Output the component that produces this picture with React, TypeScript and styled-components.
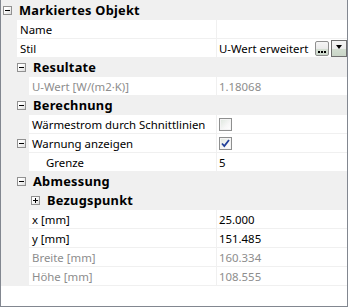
import React from "react";
import styled, { createGlobalStyle } from "styled-components";

const GlobalStyle = createGlobalStyle`
  html, body {
    margin: 0;
    padding: 0;
    background: #ffffff;
  }
  body {
    font-family: "Noto Sans", "DejaVu Sans", sans-serif;
    font-size: 11.4px;
    color: #000000;
  }
`;

type RowData =
  | { kind: "category"; level: number; label: string; expanded: boolean }
  | {
      kind: "item";
      label: string;
      gutter: number;
      indent?: number;
      value?: string;
      disabled?: boolean;
      expander?: boolean;
      editor?: "checkbox" | "dropdown";
      checked?: boolean;
    };

const rows: RowData[] = [
  { kind: "category", level: 0, label: "Markiertes Objekt", expanded: true },
  { kind: "item", label: "Name", gutter: 14 },
  { kind: "item", label: "Stil", gutter: 14, value: "U-Wert erweitert", editor: "dropdown" },
  { kind: "category", level: 1, label: "Resultate", expanded: true },
  { kind: "item", label: "U-Wert [W/(m2·K)]", gutter: 28, value: "1.18068", disabled: true },
  { kind: "category", level: 1, label: "Berechnung", expanded: true },
  { kind: "item", label: "Wärmestrom durch Schnittlinien", gutter: 28, editor: "checkbox", checked: false },
  { kind: "item", label: "Warnung anzeigen", gutter: 28, expander: true, editor: "checkbox", checked: true },
  { kind: "item", label: "Grenze", gutter: 28, indent: 14, value: "5" },
  { kind: "category", level: 1, label: "Abmessung", expanded: true },
  { kind: "category", level: 2, label: "Bezugspunkt", expanded: false },
  { kind: "item", label: "x [mm]", gutter: 28, value: "25.000" },
  { kind: "item", label: "y [mm]", gutter: 28, value: "151.485" },
  { kind: "item", label: "Breite [mm]", gutter: 28, value: "160.334", disabled: true },
  { kind: "item", label: "Höhe [mm]", gutter: 28, value: "108.555", disabled: true },
];

const Frame = styled.div`
  width: 348px;
  height: 307px;
  box-sizing: border-box;
  border: 1px solid #828790;
  border-top: none;
  background: #ffffff;
  overflow: hidden;
`;

const Grid = styled.div`
  display: flex;
  flex-direction: column;
  gap: 1px;
  padding: 1px 0;
  background: #f0f0f0;
`;

const CategoryRow = styled.div<{ $level: number }>`
  height: 18px;
  display: flex;
  align-items: center;
  padding-left: ${({ $level }) => 2 + $level * 14}px;
  background: #f0f0f0;
  white-space: nowrap;
`;

const CategoryLabel = styled.span`
  margin-left: 7px;
  font-weight: 700;
  font-size: 12.8px;
  letter-spacing: 0.25px;
`;

const Expander = styled.span`
  position: relative;
  width: 9px;
  height: 9px;
  box-sizing: border-box;
  flex: none;
  border: 1px solid #919191;
  background: linear-gradient(to bottom right, #ffffff 30%, #dcdcdc);

  &::before,
  &::after {
    content: "";
    position: absolute;
    background: #000000;
  }
  &::before {
    left: 1px;
    top: 3px;
    width: 5px;
    height: 1px;
  }
  &::after {
    left: 3px;
    top: 1px;
    width: 1px;
    height: 5px;
    display: none;
  }
  &[data-plus="true"]::after {
    display: block;
  }
`;

const ItemRow = styled.div`
  height: 18px;
  display: grid;
  grid-template-columns: 215px 1fr;
  column-gap: 1px;
  background: #f0f0f0;
`;

const LabelSide = styled.div`
  display: flex;
  min-width: 0;
`;

const Gutter = styled.div<{ $width: number }>`
  width: ${({ $width }) => $width}px;
  flex: none;
  display: flex;
  align-items: center;
  padding-left: 16px;
  box-sizing: border-box;
`;

const LabelCell = styled.div<{ $disabled?: boolean; $indent: number }>`
  flex: 1;
  min-width: 0;
  background: #ffffff;
  display: flex;
  align-items: center;
  padding-left: ${({ $indent }) => 3 + $indent}px;
  color: ${({ $disabled }) => ($disabled ? "#8d8d8d" : "#000000")};
  white-space: nowrap;
  overflow: hidden;
`;

const ValueCell = styled.div<{ $disabled?: boolean }>`
  background: #ffffff;
  display: flex;
  align-items: center;
  padding-left: 2px;
  color: ${({ $disabled }) => ($disabled ? "#8d8d8d" : "#000000")};
  white-space: nowrap;
  overflow: hidden;
`;

const ValueText = styled.span`
  flex: 1;
`;

const CheckBox = styled.span`
  width: 13px;
  height: 13px;
  box-sizing: border-box;
  border: 1px solid #8e8f8f;
  background: linear-gradient(to bottom right, #dde6dd, #f7f7f7 60%, #ffffff);
  display: flex;
  align-items: center;
  justify-content: center;
  box-shadow: inset 0 0 0 1px #f4f4f4;
`;

const EllipsisButton = styled.span`
  width: 14px;
  height: 15px;
  box-sizing: border-box;
  border: 1px solid #8f8f8f;
  border-radius: 2px;
  background: linear-gradient(to bottom, #f6f6f6 0%, #ebebeb 50%, #d5e0d3 51%, #cfdacd 100%);
  display: flex;
  align-items: flex-end;
  justify-content: center;
  padding-bottom: 2px;
  gap: 1px;
  margin-right: 2px;

  i {
    width: 2px;
    height: 2px;
    background: #000000;
  }
`;

const DropButton = styled.span`
  width: 16px;
  height: 17px;
  box-sizing: border-box;
  border: 1px solid #6f6f6f;
  background: linear-gradient(to bottom, #f4f4f4 0%, #ececec 50%, #d3ded1 51%, #c9d5c7 100%);
  display: flex;
  align-items: center;
  justify-content: center;

  &::before {
    content: "";
    width: 0;
    height: 0;
    border-left: 3.5px solid transparent;
    border-right: 3.5px solid transparent;
    border-top: 4px solid #000000;
    margin-top: -2px;
  }
`;

const CheckMark = () => (
  <svg width="9" height="9" viewBox="0 0 9 9">
    <path d="M1 4.5 L3.3 7 L8 1" fill="none" stroke="#21409a" strokeWidth="1.8" />
  </svg>
);

const App: React.FC = () => {
  return (
    <>
      <GlobalStyle />
      <Frame>
        <Grid>
          {rows.map((row, i) => {
            if (row.kind === "category") {
              return (
                <CategoryRow key={i} $level={row.level}>
                  <Expander data-plus={!row.expanded} />
                  <CategoryLabel>{row.label}</CategoryLabel>
                </CategoryRow>
              );
            }
            return (
              <ItemRow key={i}>
                <LabelSide>
                  <Gutter $width={row.gutter}>{row.expander && <Expander />}</Gutter>
                  <LabelCell $disabled={row.disabled} $indent={row.indent ?? 0}>
                    {row.label}
                  </LabelCell>
                </LabelSide>
                <ValueCell $disabled={row.disabled}>
                  {row.editor === "checkbox" ? (
                    <CheckBox>{row.checked && <CheckMark />}</CheckBox>
                  ) : (
                    <ValueText>{row.value}</ValueText>
                  )}
                  {row.editor === "dropdown" && (
                    <>
                      <EllipsisButton>
                        <i />
                        <i />
                        <i />
                      </EllipsisButton>
                      <DropButton />
                    </>
                  )}
                </ValueCell>
              </ItemRow>
            );
          })}
        </Grid>
      </Frame>
    </>
  );
};

export default App;
